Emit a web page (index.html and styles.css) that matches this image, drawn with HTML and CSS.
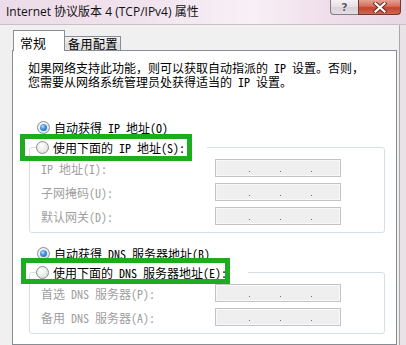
FILE: index.html
```html
<!DOCTYPE html>
<html lang="zh-CN">
<head>
<meta charset="utf-8">
<title>Internet 协议版本 4 (TCP/IPv4) 属性</title>
<link rel="stylesheet" href="styles.css">
</head>
<body>
<div class="titlebar">
  <div class="title">Internet 协议版本 4 (TCP/IPv4) 属性</div>
  <div class="caption-buttons">
    <div class="btn-help"><span class="qmark">?</span></div>
    <div class="btn-close">
      <svg width="14" height="11" viewBox="0 0 14 11"><path d="M2.5 1.5 L11.5 9.5 M11.5 1.5 L2.5 9.5" stroke="#6b2a22" stroke-width="4" stroke-linecap="square"/><path d="M2.5 1.5 L11.5 9.5 M11.5 1.5 L2.5 9.5" stroke="#ffffff" stroke-width="2.2" stroke-linecap="square"/></svg>
    </div>
  </div>
</div>
<div class="client">
  <div class="tabs">
    <div class="tab tab-active">常规</div>
    <div class="tab tab-idle">备用配置</div>
  </div>
  <div class="panel">
    <p class="desc">如果网络支持此功能，则可以获取自动指派的 IP 设置。否则，<br>您需要从网络系统管理员处获得适当的 IP 设置。</p>

    <div class="opt"><span class="radio checked"></span><span>自动获得 IP 地址(O)</span></div>
    <fieldset class="group">
      <legend class="legend legend-ip"><span class="radio"></span><span>使用下面的 IP 地址(S):</span><span class="mark mark-ip"></span></legend>
      <div class="field"><span class="lbl">IP 地址(I):</span><span class="ipbox"><i></i><i></i><i></i></span></div>
      <div class="field"><span class="lbl">子网掩码(U):</span><span class="ipbox"><i></i><i></i><i></i></span></div>
      <div class="field"><span class="lbl">默认网关(D):</span><span class="ipbox"><i></i><i></i><i></i></span></div>
    </fieldset>

    <div class="opt opt-dns"><span class="radio checked"></span><span>自动获得 DNS 服务器地址(B)</span></div>
    <fieldset class="group group-dns">
      <legend class="legend legend-dns"><span class="radio"></span><span>使用下面的 DNS 服务器地址(E):</span><span class="mark mark-dns"></span></legend>
      <div class="field"><span class="lbl">首选 DNS 服务器(P):</span><span class="ipbox"><i></i><i></i><i></i></span></div>
      <div class="field"><span class="lbl">备用 DNS 服务器(A):</span><span class="ipbox"><i></i><i></i><i></i></span></div>
    </fieldset>
  </div>
</div>
</body>
</html>
```

FILE: styles.css
```css
html, body {
  margin: 0;
  padding: 0;
}

body {
  width: 406px;
  height: 345px;
  overflow: hidden;
  background: #e9e3e8;
  font-family: "Noto Sans Mono CJK SC", "Noto Sans CJK SC", sans-serif;
  font-size: 12px;
  color: #000;
}

/* ---------- title bar ---------- */
.titlebar {
  height: 24px;
  display: flex;
  align-items: flex-start;
  background: linear-gradient(90deg, #ecdbe8 0%, #f1e3ee 35%, #f8f0f6 62%, #efdfeb 80%, #e8d6e4 100%);
  border-bottom: 1px solid #c9bfc7;
}

.title {
  padding: 5px 0 0 6px;
  font-family: "Open Sans", "Noto Sans CJK SC", sans-serif;
  font-size: 12px;
  line-height: 14px;
  color: #111;
}

.caption-buttons {
  margin-left: auto;
  margin-right: 5px;
  display: flex;
}

.btn-help {
  width: 28px;
  height: 15px;
  box-sizing: border-box;
  border: 1px solid #857a88;
  border-top: none;
  border-right: none;
  border-radius: 0 0 0 4px;
  background: linear-gradient(#f6f1f5, #e6dfe5 50%, #d9d0d8 51%, #e4dde3);
  display: flex;
  justify-content: center;
  align-items: center;
}

.qmark {
  font-family: "DejaVu Sans", sans-serif;
  font-weight: bold;
  font-size: 11px;
  line-height: 11px;
  color: #5b5566;
  text-shadow: 0 0 1px #fff, 0 0 1px #fff;
}

.btn-close {
  width: 43px;
  height: 15px;
  box-sizing: border-box;
  border: 1px solid #6e3a35;
  border-top: none;
  border-radius: 0 0 4px 0;
  background: linear-gradient(#e6a395, #d56e5b 45%, #c2432f 55%, #d06650);
  display: flex;
  justify-content: center;
  align-items: center;
}

/* ---------- client area ---------- */
.client {
  width: 400px;
  height: 320px;
  box-sizing: border-box;
  padding: 5px 0 0 12px;
  background: #f0f0f0;
  border-right: 1px solid #a9a9a9;
  display: flex;
  flex-direction: column;
}

.tabs {
  display: flex;
  align-items: flex-end;
  margin-left: 1px;
  margin-bottom: -1px;
  position: relative;
  z-index: 1;
  font-family: "Noto Sans CJK SC", sans-serif;
}

.tab {
  box-sizing: border-box;
  border: 1px solid #898c95;
  border-bottom: none;
}

.tab-active {
  width: 52px;
  height: 21px;
  padding: 4px 0 0 6px;
  font-size: 13px;
  line-height: 15px;
  background: #fff;
}

.tab-idle {
  width: 56px;
  height: 14px;
  margin-bottom: 1px;
  border-left: none;
  padding: 0 0 0 3px;
  font-size: 12px;
  line-height: 14px;
  letter-spacing: 0.5px;
  white-space: nowrap;
  background: linear-gradient(#f2f2f2, #e4e4e4 50%, #dadada 51%, #e2e2e2);
}

.panel {
  width: 385px;
  flex: 1;
  box-sizing: border-box;
  border: 1px solid #898c95;
  background: #fff;
}

.desc {
  margin: 10px 0 0 15px;
  line-height: 14px;
  white-space: nowrap;
}

/* ---------- radios ---------- */
.opt {
  display: flex;
  align-items: center;
  gap: 4px;
  height: 20px;
  margin-top: 28px;
  padding-left: 24px;
}

.opt-dns {
  margin-top: 10px;
}

.radio {
  position: relative;
  flex: none;
  width: 13px;
  height: 13px;
  box-sizing: border-box;
  border-radius: 50%;
  border: 1px solid #8b8e92;
  background: radial-gradient(circle at 40% 35%, #ffffff 0%, #eaeaea 55%, #cfcfcf 100%);
}

.radio.checked::after {
  content: "";
  position: absolute;
  left: 2px;
  top: 2px;
  width: 7px;
  height: 7px;
  border-radius: 50%;
  background: radial-gradient(circle at 40% 35%, #b8e2ff 0%, #3a8ee0 45%, #1d5ca8 100%);
}

/* ---------- group boxes ---------- */
.group {
  margin: 1px 11px 0 16px;
  padding: 0 0 4px 0;
  border: 1px solid #d5dfe5;
  border-radius: 3px;
  min-width: 0;
}

.legend {
  position: relative;
  display: flex;
  align-items: center;
  gap: 4px;
  height: 18px;
  padding: 0;
  margin-left: 6px;
  box-sizing: border-box;
  background: #fff;
}

.legend-ip {
  width: 171px;
}

.legend-dns {
  width: 212px;
}

.group-dns {
  margin-top: 0;
}

.mark {
  position: absolute;
  box-sizing: border-box;
  border: 5px solid #1fab1f;
}

.mark-ip {
  left: -16px;
  top: -4px;
  width: 172px;
  height: 27px;
}

.mark-dns {
  left: -15px;
  top: -5px;
  width: 209px;
  height: 26px;
}

.field {
  display: flex;
  align-items: center;
  height: 24px;
  padding-left: 11px;
}

.lbl {
  width: 174px;
  flex: none;
  color: #a0a0a0;
  white-space: nowrap;
}

.ipbox {
  width: 126px;
  height: 18px;
  box-sizing: border-box;
  border: 1px solid #c3c3c3;
  box-shadow: inset 0 0 0 1px #f9f9f9;
  background: #efefef;
  display: flex;
  align-items: flex-start;
  gap: 30px;
  padding: 11px 0 0 33px;
}

.ipbox i {
  display: block;
  width: 1px;
  height: 1px;
  background: #707070;
}
```
